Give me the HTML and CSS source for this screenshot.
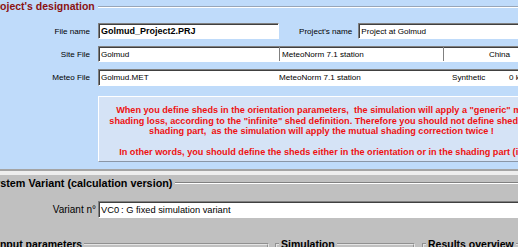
FILE: index.html
```html
<!DOCTYPE html>
<html lang="en">
<head>
    <meta charset="UTF-8">
    <title>Project's designation</title>
    <link rel="stylesheet" href="styles.css">
</head>
<body>
    <div class="page">
        <section class="designation">
            <div class="group-title">
                <h2>Project's designation</h2>
                <span class="rule"></span>
            </div>

            <div class="form-row row-file">
                <label class="field-label">File name</label>
                <div class="field field-file">Golmud_Project2.PRJ</div>
                <label class="field-label project-label">Project's name</label>
                <div class="field field-grow">Project at Golmud</div>
            </div>

            <div class="form-row row-site">
                <label class="field-label">Site File</label>
                <div class="strip">
                    <span class="cell cell-file">Golmud</span>
                    <span class="cell cell-source">MeteoNorm 7.1 station</span>
                    <span class="cell cell-country">China</span>
                </div>
            </div>

            <div class="form-row row-meteo">
                <label class="field-label">Meteo File</label>
                <div class="strip strip-meteo">
                    <span class="cell cell-file">Golmud.MET</span>
                    <span class="cell cell-source">MeteoNorm 7.1 station</span>
                    <span class="cell cell-type">Synthetic</span>
                    <span class="cell cell-size">0 kb</span>
                </div>
            </div>

            <div class="warning">
                <p>When you define sheds in the orientation parameters,  the simulation will apply a "generic" mu</p>
                <p>shading loss, according to the "infinite" shed definition. Therefore you should not define sheds in</p>
                <p>shading part,  as the simulation will apply the mutual shading correction twice !</p>
                <p class="gap"></p>
                <p>In other words, you should define the sheds either in the orientation or in the shading part (in</p>
            </div>
        </section>

        <div class="divider"></div>

        <section class="variant">
            <div class="group-title">
                <h2>System Variant (calculation version)</h2>
                <span class="rule"></span>
            </div>

            <div class="form-row row-variant">
                <label class="field-label">Variant n°</label>
                <div class="field field-grow">
                    <span class="variant-code">VC0</span>
                    <span>: G fixed simulation variant</span>
                </div>
            </div>

            <div class="sub-groups">
                <fieldset class="sub-group sg-input"><legend>Input parameters</legend></fieldset>
                <fieldset class="sub-group sg-sim"><legend>Simulation</legend></fieldset>
                <fieldset class="sub-group sg-results"><legend>Results overview</legend></fieldset>
            </div>
        </section>
    </div>
</body>
</html>
```

FILE: styles.css
```css
* {
    margin: 0;
    padding: 0;
    box-sizing: border-box;
}

body {
    width: 518px;
    height: 247px;
    overflow: hidden;
    background-color: #c0c0c0;
    color: #000;
    font-family: 'Liberation Sans', Arial, sans-serif;
    font-size: 8.1px;
}

.page {
    width: 600px;
}

/* project block */

.designation {
    height: 169px;
    background-color: #bfdbfa;
}

.group-title {
    display: flex;
    align-items: center;
    height: 13px;
}

.group-title h2 {
    margin-left: -11px;
    font-size: 10.5px;
    line-height: 13px;
    font-weight: bold;
    color: #8b1111;
    white-space: nowrap;
}

.rule {
    flex: 1;
    height: 2px;
    margin-left: 3px;
    border-top: 1px solid #98a6b8;
    border-bottom: 1px solid #fff;
}

.form-row {
    display: flex;
    align-items: center;
    height: 16px;
}

.row-file {
    margin-top: 10px;
}

.row-site {
    margin-top: 7px;
}

.row-meteo {
    margin-top: 7px;
    height: 17px;
}

.field-label {
    flex-shrink: 0;
    width: 90px;
    margin-right: 8px;
    text-align: right;
    white-space: nowrap;
}

.field,
.strip {
    display: flex;
    align-items: center;
    height: 100%;
    background-color: #fff;
    border: 1px solid;
    border-color: #808080 #fff #fff #808080;
    box-shadow: inset 1px 1px 0 #404040;
    white-space: nowrap;
}

.field {
    padding-left: 2px;
}

.field-file {
    width: 181px;
    font-size: 9px;
    font-weight: bold;
}

.project-label {
    width: auto;
    margin-left: 20px;
    margin-right: 6px;
}

.field-grow,
.strip {
    flex: 1;
}

.cell {
    display: flex;
    align-items: center;
    height: 100%;
    padding-left: 2px;
    white-space: nowrap;
}

.cell-file {
    width: 180px;
}

.cell-source {
    width: 164px;
    border-left: 1px solid #808080;
}

.cell-country {
    width: 110px;
    justify-content: center;
    border-left: 1px solid #808080;
}

.strip-meteo .cell-source {
    width: 171px;
    padding-left: 0;
    border-left: 0;
}

.cell-type {
    width: 57px;
}

.warning {
    width: 447px;
    height: 66px;
    margin: 10px 0 0 98px;
    padding-top: 8px;
    background-color: #d5e3f6;
    border: 1px solid;
    border-color: #fff #8a96a6 #8a96a6 #fff;
    color: #ee1111;
    font-size: 9.15px;
    font-weight: bold;
    line-height: 10.5px;
    text-align: center;
}

.warning p {
    white-space: pre;
}

.warning .gap {
    height: 10.5px;
}

.divider {
    height: 6px;
    border-top: 2px solid #a4a4a4;
    background-color: #eeeeee;
}

/* variant block */

.variant {
    height: 72px;
    background-color: #c0c0c0;
}

.variant .group-title {
    margin-top: 2px;
    height: 12px;
}

.variant .group-title h2 {
    margin-left: -13px;
    font-size: 10.8px;
    line-height: 12px;
    color: #000;
}

.variant .rule {
    border-top-color: #808080;
}

.row-variant {
    margin-top: 12px;
    height: 17px;
}

.row-variant .field-label {
    width: 96px;
    margin-right: 2px;
    font-size: 10px;
}

.row-variant .field {
    font-size: 9.3px;
}

.variant-code {
    flex-shrink: 0;
    width: 20px;
}

.sub-groups {
    display: flex;
    margin-top: 20px;
}

.sub-group {
    min-width: 0;
    height: 40px;
    padding: 0 0 0 2px;
    border: 2px groove #e4e4e4;
}

.sub-group legend {
    padding: 0 2px;
    font-size: 10.5px;
    line-height: 12px;
    font-weight: bold;
    white-space: nowrap;
}

.sg-input {
    width: 278px;
    margin-left: -9px;
}

.sg-sim {
    width: 140px;
    margin-left: 6px;
}

.sg-results {
    flex: 1;
    margin-left: 7px;
}
```
